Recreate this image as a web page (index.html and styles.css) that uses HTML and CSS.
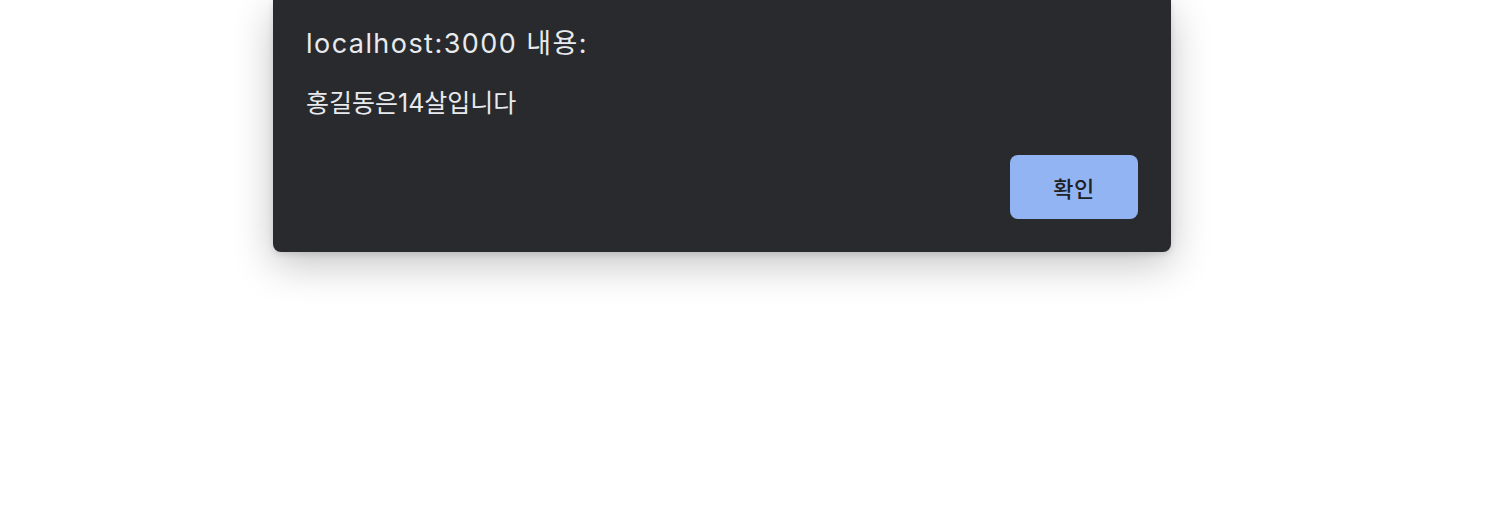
FILE: index.html
```html
<!DOCTYPE html>
<html lang="ko">
<head>
<meta charset="utf-8">
<title>alert</title>
<link rel="stylesheet" href="styles.css">
</head>
<body>
<div class="dialog">
  <div class="title">localhost:3000 내용:</div>
  <div class="message">홍길동은14살입니다</div>
  <div class="actions">
    <button class="ok">확인</button>
  </div>
</div>
</body>
</html>
```
FILE: styles.css
```css
html, body {
  margin: 0;
  padding: 0;
  background: #ffffff;
}
body {
  width: 1497px;
  height: 514px;
  overflow: hidden;
  font-family: Inter, "Noto Sans CJK KR", sans-serif;
}
.dialog {
  margin-left: 273px;
  width: 898px;
  box-sizing: border-box;
  padding: 28px 33px 33px 33px;
  background: #292a2e;
  border-radius: 0 0 8px 8px;
  box-shadow: 0 12px 40px rgba(0, 0, 0, 0.24), 0 2px 6px rgba(0, 0, 0, 0.12);
  color: #e8eaed;
  display: flex;
  flex-direction: column;
}
.title {
  font-size: 27px;
  line-height: 32px;
  letter-spacing: 1.45px;
}
.message {
  margin-top: 28px;
  font-size: 25px;
  line-height: 30px;
  letter-spacing: 0px;
}
.actions {
  margin-top: 37px;
  display: flex;
  justify-content: flex-end;
}
.ok {
  width: 128px;
  height: 64px;
  border: none;
  border-radius: 8px;
  background: #93b4f2;
  color: #202124;
  font-family: Inter, "Noto Sans CJK KR", sans-serif;
  font-size: 22px;
  letter-spacing: 0.5px;
  font-weight: 500;
  padding: 0;
}
```
